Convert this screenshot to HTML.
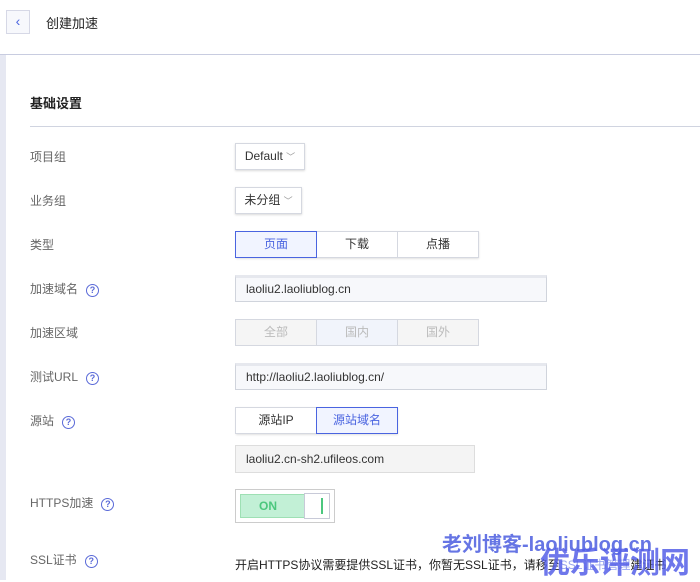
<!DOCTYPE html>
<html><head><meta charset="utf-8"><style>
*{box-sizing:border-box;margin:0;padding:0}
body{width:700px;height:580px;overflow:hidden;background:#fff;font-family:"Liberation Sans","Noto Sans CJK SC",sans-serif;font-size:12px;color:#333;position:relative}
.a{position:absolute}
.lbl{position:absolute;left:30px;color:#666;font-size:12px;line-height:16px}
.q{display:inline-block;width:13px;height:13px;border:1.5px solid #5a6ad8;border-radius:50%;color:#5a6ad8;font-size:9px;line-height:10px;text-align:center;font-weight:bold;margin-left:8px;vertical-align:0px}
.btn{position:absolute;border:1px solid #d5d8e0;background:#fff;box-shadow:0 1px 2px rgba(0,0,0,.15);text-align:center;color:#333}
.seg{position:absolute;display:flex;height:27px;box-shadow:0 1px 2px rgba(0,0,0,.12)}
.seg div{width:82px;border:1px solid #d5d8e0;text-align:center;line-height:25px;margin-left:-1px;background:#fff}
.seg .on{border-color:#4a64e0;background:#f1f4ff;color:#4a64e0;z-index:1}
.inp{position:absolute;left:235px;border:1px solid #d0d4dc;background:#f7f8fb;height:27px;padding-left:10px;border-top:3px solid #e6e8ee;line-height:22px}
</style></head><body>
<div class="a" style="left:6px;top:10px;width:24px;height:24px;border:1px solid #d6d8e6;background:#f7f8fc;color:#4a64e0;text-align:center;line-height:20px;font-size:14px">‹</div>
<div class="a" style="left:46px;top:13px;font-size:13px;color:#222">创建加速</div>
<div class="a" style="left:0;top:54px;width:700px;height:1px;background:#c8cce0"></div>
<div class="a" style="left:0;top:55px;width:6px;height:525px;background:#e6e8f2"></div>
<div class="a" style="left:30px;top:93px;font-size:13px;font-weight:bold;color:#222">基础设置</div>
<div class="a" style="left:30px;top:126px;width:670px;height:1px;background:#d0d4e0"></div>

<div class="lbl" style="top:149px">项目组</div>
<div class="btn" style="left:235px;top:143px;width:70px;height:27px;line-height:25px">Default <span style="color:#999;font-size:9px">﹀</span></div>
<div class="lbl" style="top:193px">业务组</div>
<div class="btn" style="left:235px;top:187px;width:67px;height:27px;line-height:25px">未分组 <span style="color:#999;font-size:9px">﹀</span></div>
<div class="lbl" style="top:237px">类型</div>
<div class="seg" style="left:236px;top:231px"><div class="on">页面</div><div>下载</div><div>点播</div></div>
<div class="lbl" style="top:281px">加速域名<span class="q">?</span></div>
<div class="inp" style="top:275px;width:312px">laoliu2.laoliublog.cn</div>
<div class="lbl" style="top:325px">加速区域</div>
<div class="seg" style="left:236px;top:319px;box-shadow:none;color:#bbb"><div style="background:#f5f5f5">全部</div><div style="background:#f1f4fb">国内</div><div style="background:#f5f5f5">国外</div></div>
<div class="lbl" style="top:369px">测试URL<span class="q">?</span></div>
<div class="inp" style="top:363px;width:312px">http://laoliu2.laoliublog.cn/</div>
<div class="lbl" style="top:413px">源站<span class="q">?</span></div>
<div class="seg" style="left:236px;top:407px"><div>源站IP</div><div class="on">源站域名</div></div>
<div class="a" style="left:235px;top:445px;width:240px;height:28px;border:1px solid #ddd;background:#f4f4f4;line-height:26px;padding-left:10px">laoliu2.cn-sh2.ufileos.com</div>
<div class="lbl" style="top:495px">HTTPS加速<span class="q">?</span></div>
<div class="a" style="left:235px;top:489px;width:100px;height:34px;border:1px solid #ccc;background:#fff"></div>
<div class="a" style="left:240px;top:494px;width:90px;height:24px;border:1px solid #9ee0b4;background:#c2f0d6;color:#4cc77e;line-height:22px;padding-left:18px;font-weight:bold">ON</div>
<div class="a" style="left:304px;top:493px;width:26px;height:26px;border:1px solid #c8cad8;background:#fff"></div>
<div class="a" style="left:321px;top:498px;width:2px;height:16px;background:#4cc77e"></div>
<div class="lbl" style="top:552px">SSL证书<span class="q">?</span></div>
<div class="a" style="left:235px;top:556px;font-size:12px;color:#222;white-space:nowrap">开启HTTPS协议需要提供SSL证书，你暂无SSL证书，请移至<span style="color:#9aa6ee">SSL证书管理</span>建证书</div>
<div class="a" style="left:442px;top:528px;font-size:20px;font-weight:bold;color:#4c5ee0;opacity:.85;white-space:nowrap">老刘博客-laoliublog.cn</div>
<div class="a" style="left:540px;top:538px;font-size:30px;font-weight:bold;color:#5560e8;opacity:.85;white-space:nowrap">优乐评测网</div>
</body></html>
